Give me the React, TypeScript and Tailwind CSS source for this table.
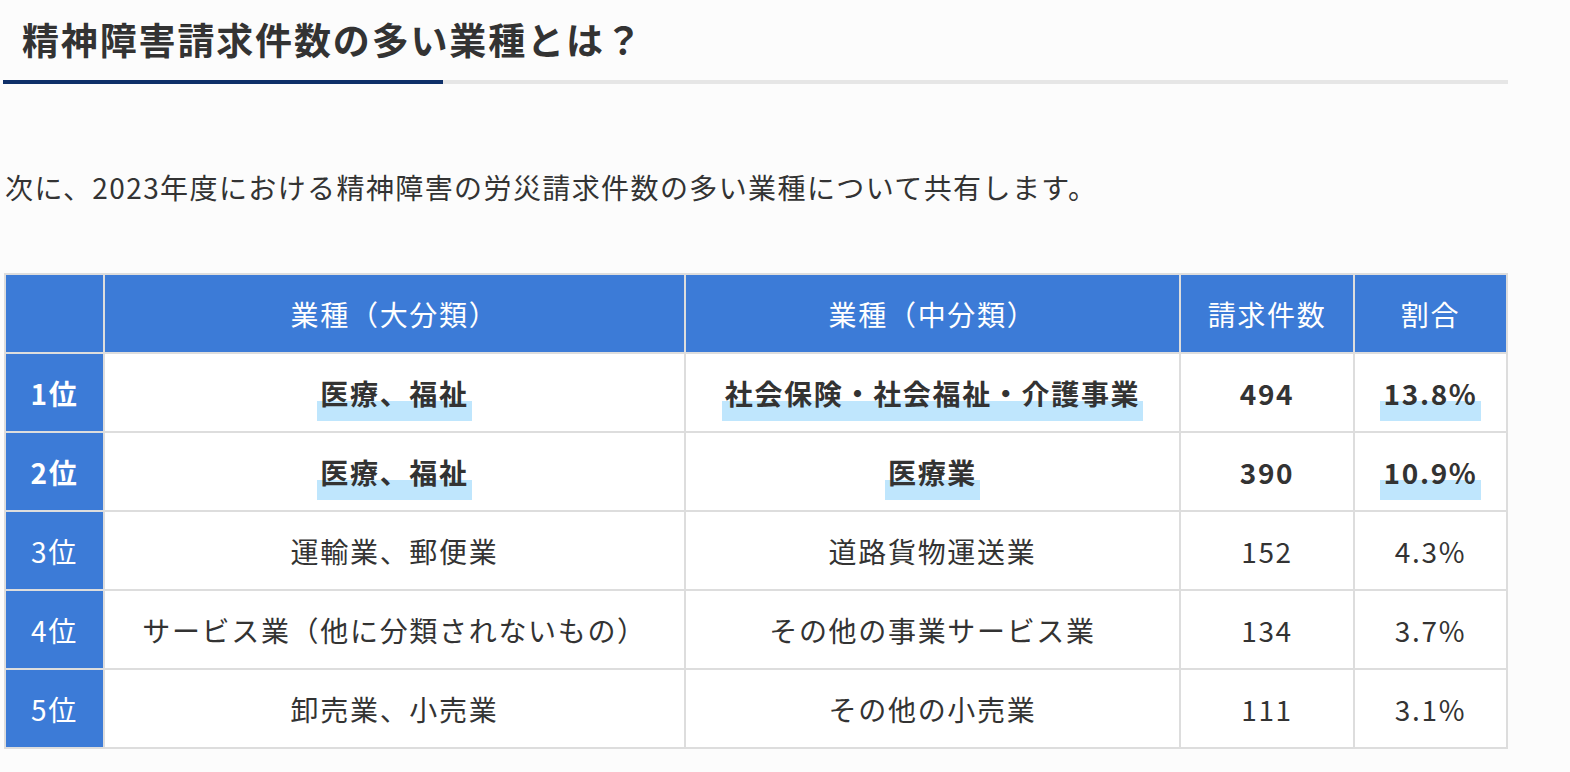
const font = '"Noto Sans CJK JP", "Noto Sans", sans-serif';

interface Row {
  rank: string;
  major: string;
  middle: string;
  count: string;
  ratio: string;
  strong?: boolean;
}

const rows: Row[] = [
  { rank: '1位', major: '医療、福祉', middle: '社会保険・社会福祉・介護事業', count: '494', ratio: '13.8%', strong: true },
  { rank: '2位', major: '医療、福祉', middle: '医療業', count: '390', ratio: '10.9%', strong: true },
  { rank: '3位', major: '運輸業、郵便業', middle: '道路貨物運送業', count: '152', ratio: '4.3%' },
  { rank: '4位', major: 'サービス業（他に分類されないもの）', middle: 'その他の事業サービス業', count: '134', ratio: '3.7%' },
  { rank: '5位', major: '卸売業、小売業', middle: 'その他の小売業', count: '111', ratio: '3.1%' },
];

const Marker = ({ children }: { children: React.ReactNode }) => (
  <span className="bg-[linear-gradient(transparent_58%,#bfe6fd_58%)] px-[3px] pb-[8px]">{children}</span>
);

const App = () => {
  return (
    <div className="min-h-screen bg-[#fcfcfc] text-[#333]" style={{ fontFamily: font }}>
      <div className="ml-[3px] w-[1505px]">
        <h2 className="pl-[19px] pt-[13px] pb-[15px] text-[37px] font-bold leading-[52px] tracking-[0.05em] text-[#333]">
          精神障害請求件数の多い業種とは？
        </h2>
        <div className="flex h-[4px]">
          <div className="w-[440px] bg-[#0f3069]" />
          <div className="flex-1 bg-[#e6e6e6]" />
        </div>

        <p className="mt-[80px] ml-[2px] text-[28px] leading-[47px] tracking-[0.05em]">
          次に、2023年度における精神障害の労災請求件数の多い業種について共有します。
        </p>

        <table className="mt-[62px] ml-[1px] w-[1502px] table-fixed border-collapse text-center text-[28px] tracking-[0.06em]">
          <colgroup>
            <col className="w-[99px]" />
            <col className="w-[581px]" />
            <col className="w-[495px]" />
            <col className="w-[174px]" />
            <col className="w-[153px]" />
          </colgroup>
          <thead>
            <tr className="h-[79px] bg-[#3c7bd7] text-white">
              <th className="border-2 border-[#dddddd] font-normal" />
              <th className="border-2 border-[#dddddd] font-normal">業種（大分類）</th>
              <th className="border-2 border-[#dddddd] font-normal">業種（中分類）</th>
              <th className="border-2 border-[#dddddd] font-normal">請求件数</th>
              <th className="border-2 border-[#dddddd] font-normal">割合</th>
            </tr>
          </thead>
          <tbody>
            {rows.map((r) => (
              <tr key={r.rank} className={`h-[79px] ${r.strong ? 'font-bold' : 'font-normal'}`}>
                <td className="border-2 border-[#dddddd] bg-[#3c7bd7] text-white">{r.rank}</td>
                <td className="border-2 border-[#dddddd] bg-white">
                  {r.strong ? <Marker>{r.major}</Marker> : r.major}
                </td>
                <td className="border-2 border-[#dddddd] bg-white">
                  {r.strong ? <Marker>{r.middle}</Marker> : r.middle}
                </td>
                <td className="border-2 border-[#dddddd] bg-white">{r.count}</td>
                <td className="border-2 border-[#dddddd] bg-white">
                  {r.strong ? <Marker>{r.ratio}</Marker> : r.ratio}
                </td>
              </tr>
            ))}
          </tbody>
        </table>
      </div>
    </div>
  );
};

export default App;
